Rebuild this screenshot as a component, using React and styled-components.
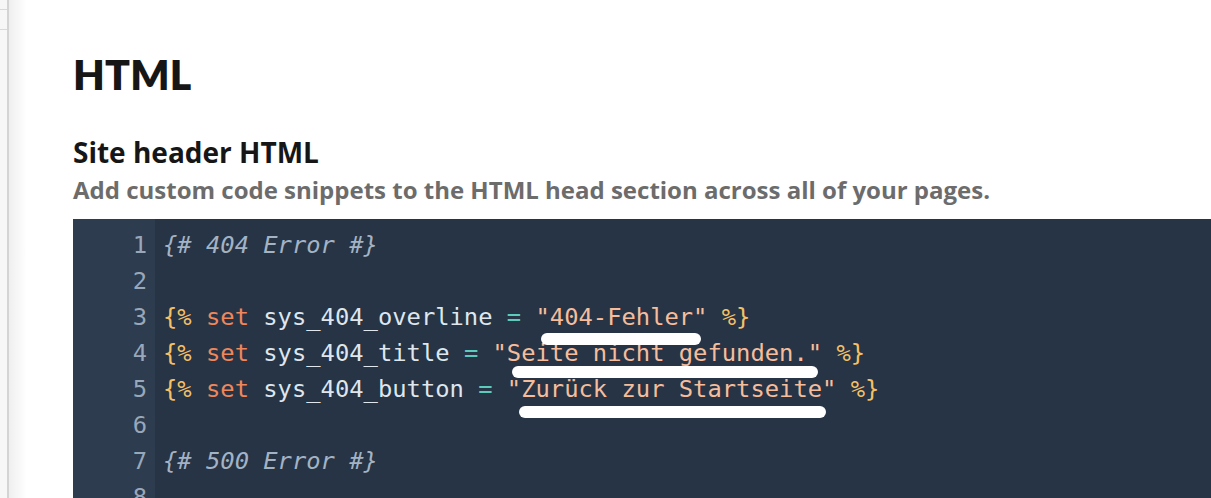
import React from "react";
import styled, { createGlobalStyle } from "styled-components";

const GlobalStyle = createGlobalStyle`
  html, body {
    margin: 0;
    padding: 0;
    background: #ffffff;
    overflow: hidden;
  }
  body {
    font-family: "Open Sans", "Noto Sans", sans-serif;
  }
`;

const Page = styled.div`
  display: flex;
  height: 498px;
  width: 1211px;
  overflow: hidden;
`;

const Rail = styled.div`
  flex: 0 0 7px;
  background: #f7f7f7;
  border-right: 2px solid #d4d4d4;
  display: flex;
  flex-direction: column;
`;

const RailTick = styled.div`
  height: 1px;
  margin-top: ${(p) => p.$top}px;
  background: #d9d9d9;
`;

const Main = styled.main`
  flex: 1;
  min-width: 0;
  padding: 50px 0 0 64px;
  background: linear-gradient(to right, #efefef 0px, #ffffff 18px);
`;

const Title = styled.h1`
  margin: 0;
  font-family: Lato, "Open Sans", sans-serif;
  font-size: 41px;
  font-weight: 800;
  color: #161616;
  line-height: 50px;
  letter-spacing: 0.2px;
`;

const Section = styled.section`
  margin-top: 34px;
`;

const SectionTitle = styled.h2`
  margin: 0;
  font-size: 28px;
  font-weight: 700;
  color: #161616;
  line-height: 36px;
`;

const Hint = styled.p`
  margin: 5px 0 0;
  font-size: 24px;
  font-weight: 700;
  color: #6c6c6c;
  line-height: 30px;
`;

const Editor = styled.div`
  margin-top: 14px;
  display: flex;
  background: #263445;
  height: 300px;
  font-family: "DejaVu Sans Mono", "Liberation Mono", monospace;
  font-size: 23.8px;
  line-height: 36px;
`;

const Gutter = styled.div`
  flex: 0 0 82px;
  background: #2d3c4f;
  padding-top: 8px;
  box-sizing: border-box;
  text-align: right;
  padding-right: 8px;
  color: #98a8ba;
`;

const Lines = styled.div`
  position: relative;
  flex: 1;
  padding: 8px 0 0 8px;
  color: #dfe6ee;
  white-space: pre;
`;

const Line = styled.div`
  height: 36px;
`;

const Tok = styled.span`
  color: ${(p) =>
    ({
      comment: "#a3b2c4",
      delim: "#f4c066",
      kw: "#f0875a",
      op: "#5ccabd",
      str: "#f7bd9b",
      ident: "#dfe6ee",
    })[p.$k]};
  font-style: ${(p) => (p.$k === "comment" ? "italic" : "normal")};
`;

const Redaction = styled.div`
  position: absolute;
  height: 12px;
  border-radius: 6px;
  background: #ffffff;
`;

const code = [
  [["comment", "{# 404 Error #}"]],
  [],
  [
    ["delim", "{%"],
    ["ident", " "],
    ["kw", "set"],
    ["ident", " sys_404_overline "],
    ["op", "="],
    ["ident", " "],
    ["str", '"404-Fehler"'],
    ["ident", " "],
    ["delim", "%}"],
  ],
  [
    ["delim", "{%"],
    ["ident", " "],
    ["kw", "set"],
    ["ident", " sys_404_title "],
    ["op", "="],
    ["ident", " "],
    ["str", '"Seite nicht gefunden."'],
    ["ident", " "],
    ["delim", "%}"],
  ],
  [
    ["delim", "{%"],
    ["ident", " "],
    ["kw", "set"],
    ["ident", " sys_404_button "],
    ["op", "="],
    ["ident", " "],
    ["str", '"Zurück zur Startseite"'],
    ["ident", " "],
    ["delim", "%}"],
  ],
  [],
  [["comment", "{# 500 Error #}"]],
  [],
];

// white scribbles over the strings, relative to the code column
const marks = [
  { left: 386, top: 114, width: 160 },
  { left: 357, top: 147, width: 306 },
  { left: 364, top: 187, width: 307 },
];

export default function App() {
  return (
    <>
      <GlobalStyle />
      <Page>
        <Rail>
          <RailTick $top={9} />
          <RailTick $top={19} />
        </Rail>
        <Main>
          <Title>HTML</Title>
          <Section>
            <SectionTitle>Site header HTML</SectionTitle>
            <Hint>
              Add custom code snippets to the HTML head section across all of
              your pages.
            </Hint>
            <Editor>
              <Gutter>
                {code.map((_, i) => (
                  <Line key={i}>{i + 1}</Line>
                ))}
              </Gutter>
              <Lines>
                {code.map((toks, i) => (
                  <Line key={i}>
                    {toks.map(([k, t], j) => (
                      <Tok key={j} $k={k}>
                        {t}
                      </Tok>
                    ))}
                  </Line>
                ))}
                {marks.map((m, i) => (
                  <Redaction
                    key={i}
                    style={{ left: m.left, top: m.top, width: m.width }}
                  />
                ))}
              </Lines>
            </Editor>
          </Section>
        </Main>
      </Page>
    </>
  );
}
